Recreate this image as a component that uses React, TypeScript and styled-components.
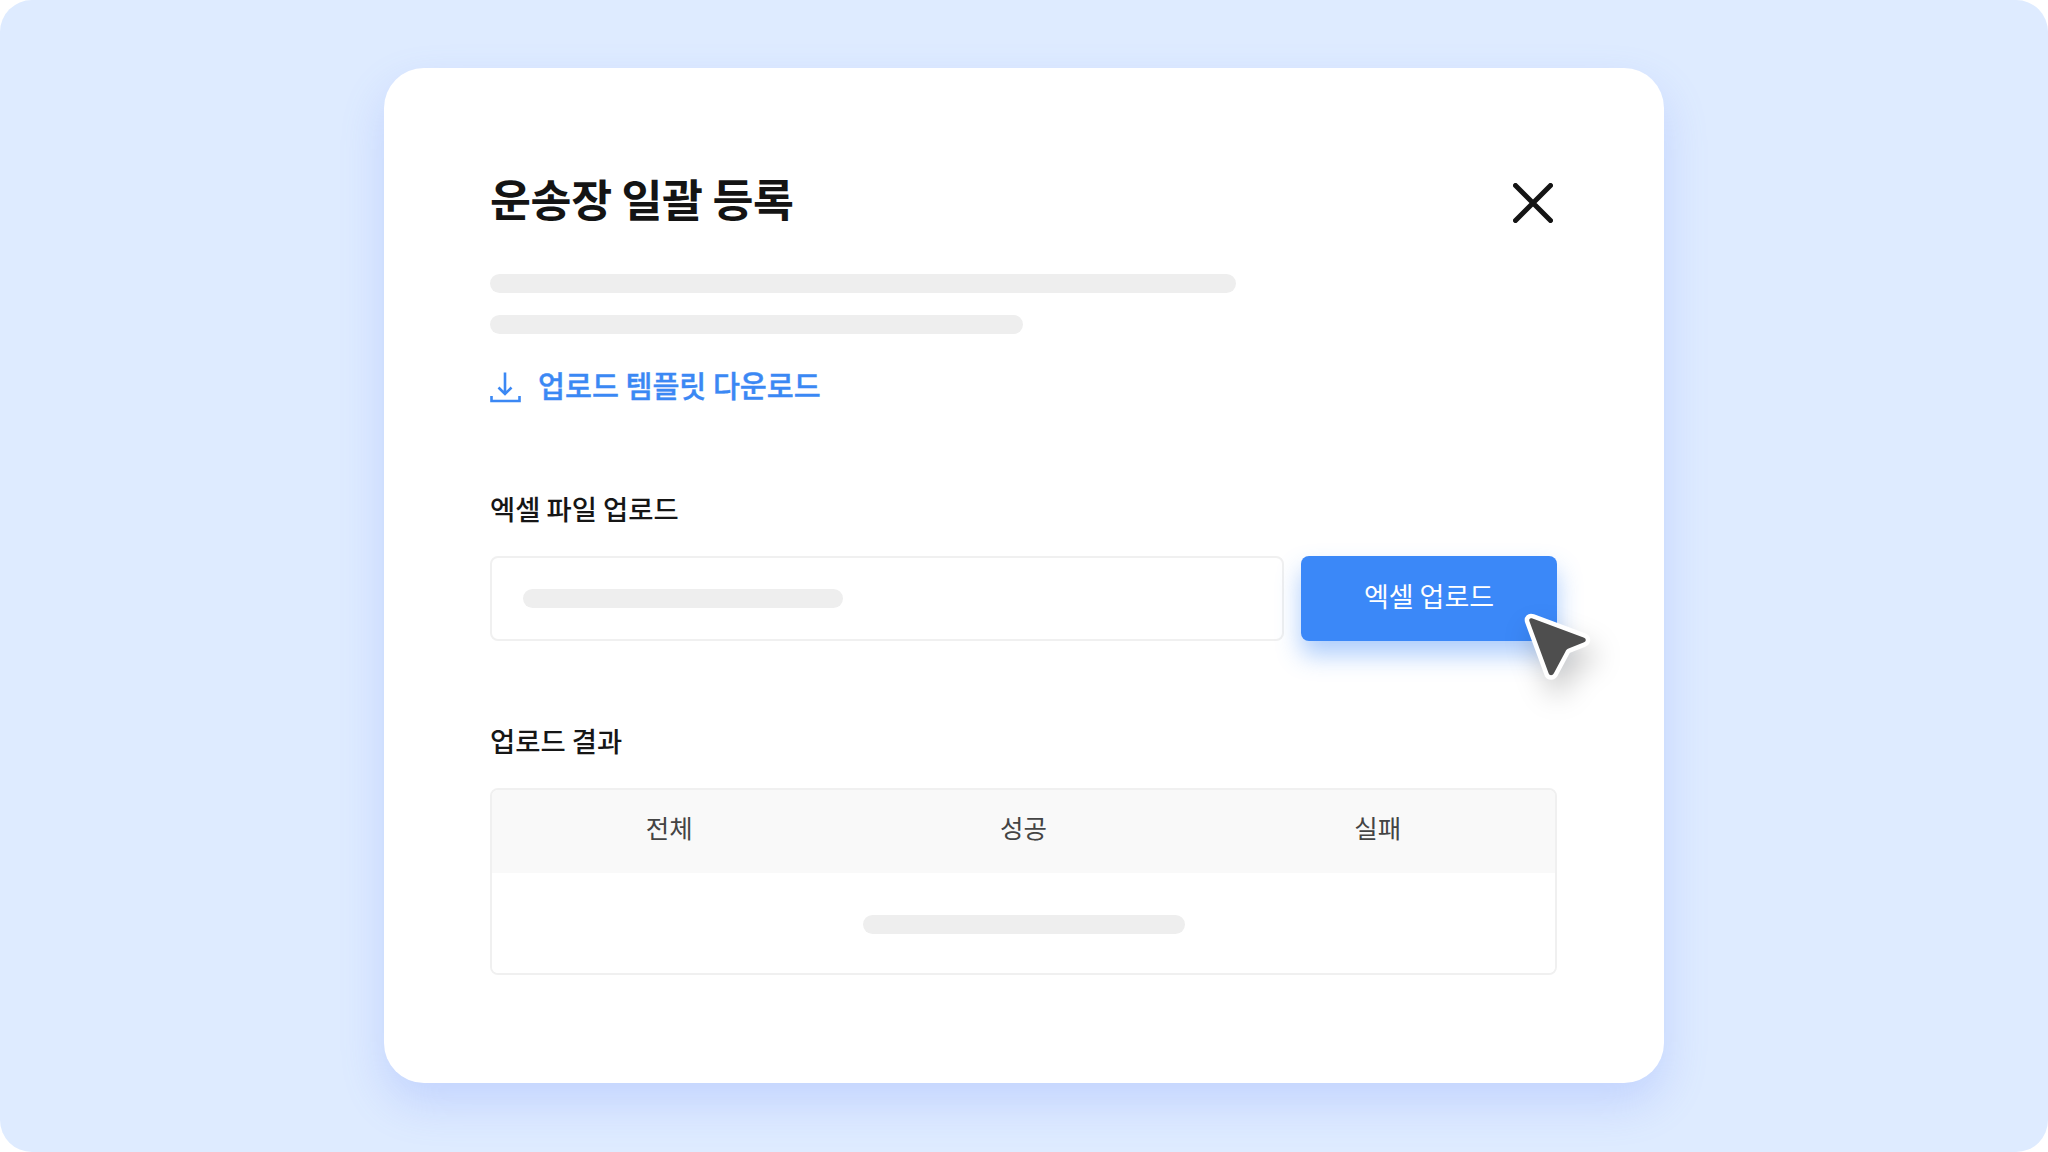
import React from "react";
import styled, { createGlobalStyle } from "styled-components";

const Global = createGlobalStyle`
  html, body { margin: 0; padding: 0; background: #ffffff; }
  body { font-family: "Noto Sans CJK KR", "Noto Sans", sans-serif; }
`;

const Page = styled.div`
  width: 2048px;
  height: 1152px;
  box-sizing: border-box;
  padding-top: 68px;
  background: #deebff;
  border-radius: 32px;
  display: flex;
  align-items: flex-start;
  justify-content: center;
  overflow: hidden;
`;

const Modal = styled.section`
  position: relative;
  width: 1280px;
  height: 1015px;
  box-sizing: border-box;
  padding: 106px 107px 0 106px;
  background: #ffffff;
  border-radius: 40px;
  box-shadow: 0 20px 44px rgba(110, 140, 250, 0.24);
  display: flex;
  flex-direction: column;
`;

const Header = styled.header`
  display: flex;
  align-items: center;
  justify-content: space-between;
  height: 48px;
`;

const Title = styled.h1`
  margin: 0;
  font-size: 44.5px;
  font-weight: 700;
  line-height: 48px;
  letter-spacing: -0.35px;
  color: #141414;
`;

const CloseIcon = styled.svg`
  width: 40px;
  height: 40px;
  margin: 10px 4px 0 0;
  display: block;
`;

const Skeleton = styled.div<{ $w: number; $mt?: number }>`
  width: ${(p) => p.$w}px;
  height: 19px;
  margin-top: ${(p) => p.$mt ?? 0}px;
  border-radius: 10px;
  background: #eeeeee;
  flex: none;
`;

const DownloadLink = styled.a`
  display: flex;
  align-items: center;
  gap: 16px;
  height: 40px;
  margin-top: 30px;
  font-size: 29.3px;
  font-weight: 500;
  line-height: 40px;
  color: #3b88f4;
  -webkit-text-stroke: 0.4px #3b88f4;
`;

const DownloadIcon = styled.svg`
  width: 32px;
  height: 32px;
  margin-top: 6px;
  display: block;
  flex: none;
`;

const SectionLabel = styled.h2<{ $mt: number }>`
  margin: ${(p) => p.$mt}px 0 0;
  font-size: 27.4px;
  font-weight: 500;
  line-height: 36px;
  color: #161616;
`;

const UploadRow = styled.div`
  display: flex;
  gap: 17px;
  height: 85px;
  margin-top: 30px;
`;

const FileInput = styled.div`
  flex: 1;
  box-sizing: border-box;
  border: 2px solid #f0f0f0;
  border-radius: 8px;
  display: flex;
  align-items: center;
  padding-left: 31px;
`;

const ButtonWrap = styled.div`
  position: relative;
  width: 256px;
  flex: none;
`;

const UploadButton = styled.button`
  width: 100%;
  height: 100%;
  border: 0;
  border-radius: 8px;
  padding: 0 0 6px;
  background: #3b88f8;
  color: #ffffff;
  font-family: inherit;
  font-size: 27px;
  font-weight: 400;
  box-shadow: 0 14px 24px rgba(59, 136, 248, 0.42);
`;

const Cursor = styled.svg`
  position: absolute;
  left: 220px;
  top: 52px;
  width: 80px;
  height: 90px;
  overflow: visible;
  filter: drop-shadow(6px 16px 14px rgba(0, 0, 0, 0.2));
`;

const ResultTable = styled.div`
  margin-top: 30px;
  height: 187px;
  box-sizing: border-box;
  border: 2px solid #f0f0f0;
  border-radius: 8px;
  overflow: hidden;
  display: flex;
  flex-direction: column;
`;

const TableHead = styled.div`
  height: 83px;
  flex: none;
  background: #f9f9f9;
  display: grid;
  grid-template-columns: repeat(3, 1fr);
`;

const HeadCell = styled.div`
  display: flex;
  align-items: center;
  justify-content: center;
  padding-bottom: 10px;
  font-size: 25.5px;
  font-weight: 400;
  color: #444444;
`;

const TableBody = styled.div`
  flex: 1;
  display: flex;
  align-items: center;
  justify-content: center;
  padding-top: 2px;
  background: #ffffff;
`;

export default function App() {
  return (
    <>
      <Global />
      <Page>
        <Modal>
          <Header>
            <Title>운송장 일괄 등록</Title>
            <CloseIcon viewBox="0 0 40 40" fill="none">
              <path d="M2.5 2.5L37.5 37.5M37.5 2.5L2.5 37.5" stroke="#141414" strokeWidth="5" strokeLinecap="round" />
            </CloseIcon>
          </Header>
          <Skeleton $w={746} $mt={52} />
          <Skeleton $w={533} $mt={22} />
          <DownloadLink>
            <DownloadIcon viewBox="0 0 32 32" fill="none">
              <path
                d="M15 1.5V22.5M8.5 16.5L15 23L21.5 16.5M1.5 25V30H29.5V25"
                stroke="#3b88f4"
                strokeWidth="2.6"
              />
            </DownloadIcon>
            업로드 템플릿 다운로드
          </DownloadLink>
          <SectionLabel $mt={86}>엑셀 파일 업로드</SectionLabel>
          <UploadRow>
            <FileInput>
              <Skeleton $w={320} />
            </FileInput>
            <ButtonWrap>
              <UploadButton>엑셀 업로드</UploadButton>
              <Cursor viewBox="0 0 80 90" fill="none">
                <path
                  d="M11.5 10.5L62.5 29.5C65.5 30.6 65.5 33.4 62.5 34.6L47.5 40.5C46 41.1 45 42 44.5 43.5L33 65C31.5 68 28.5 68 27.5 65L8.5 13.5C7.6 11 9 9.6 11.5 10.5Z"
                  fill="#4e4e4e"
                  stroke="#ffffff"
                  strokeWidth="9"
                  strokeLinejoin="round"
                  paintOrder="stroke"
                />
              </Cursor>
            </ButtonWrap>
          </UploadRow>
          <SectionLabel $mt={81}>업로드 결과</SectionLabel>
          <ResultTable>
            <TableHead>
              <HeadCell>전체</HeadCell>
              <HeadCell>성공</HeadCell>
              <HeadCell>실패</HeadCell>
            </TableHead>
            <TableBody>
              <Skeleton $w={322} />
            </TableBody>
          </ResultTable>
        </Modal>
      </Page>
    </>
  );
}
